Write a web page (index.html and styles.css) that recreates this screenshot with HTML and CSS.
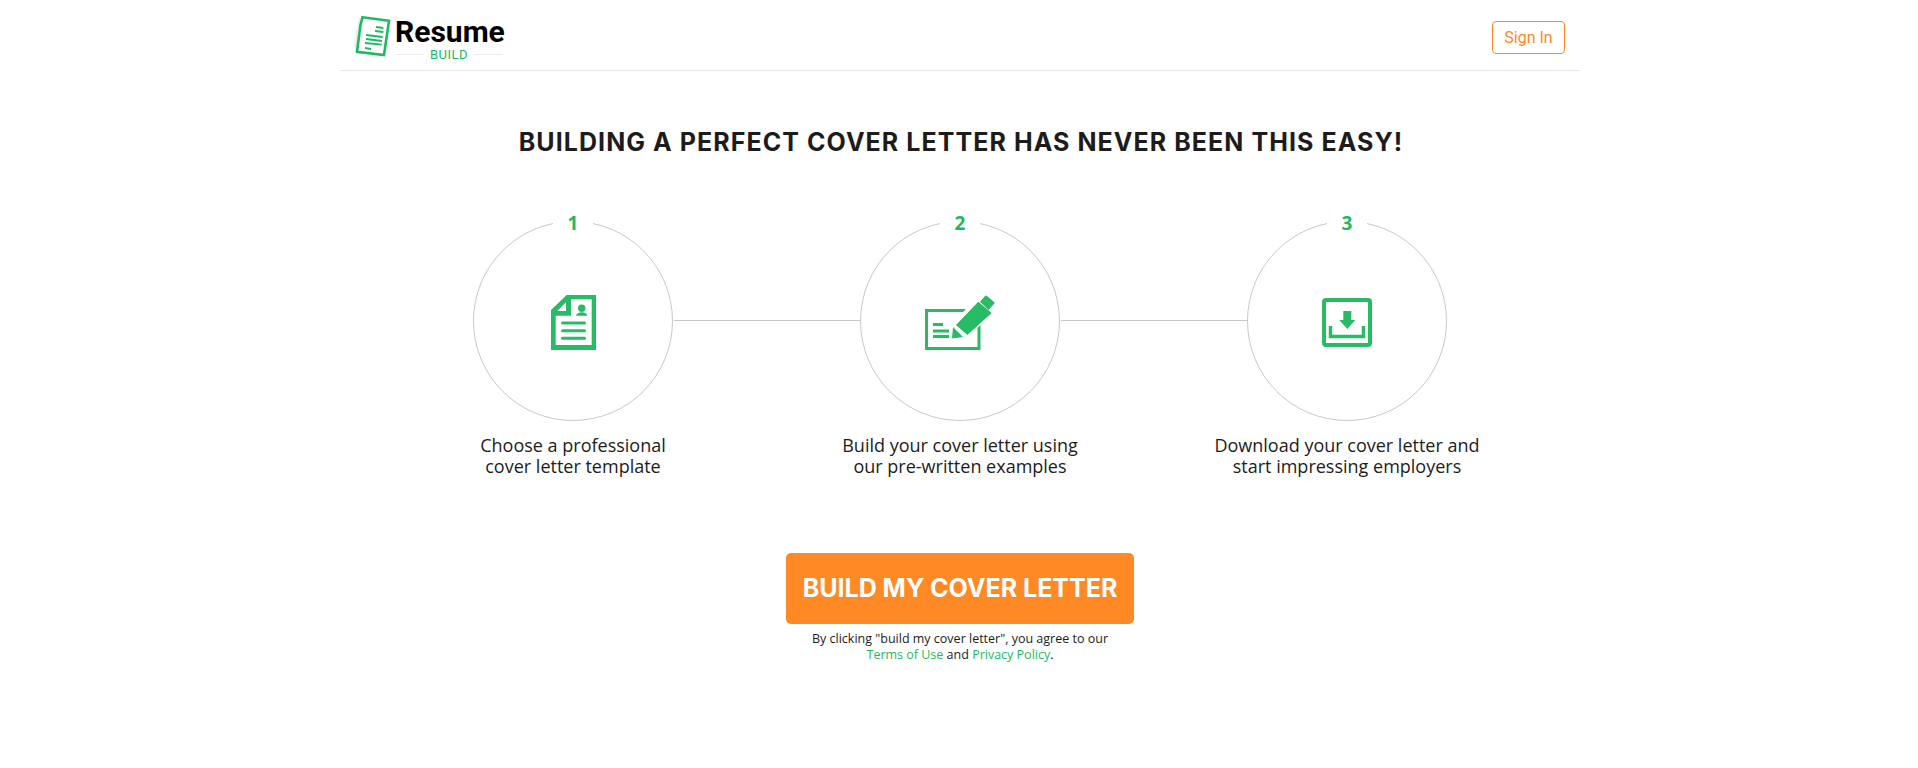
FILE: index.html
```html
<!DOCTYPE html>
<html lang="en">
<head>
  <meta charset="UTF-8">
  <title>Resume Build - Cover Letter</title>
  <link rel="stylesheet" href="styles.css">
</head>
<body>
  <div class="container">
    <header class="topbar">
      <a class="logo" href="#">
        <svg class="logo-icon" width="38" height="44" viewBox="0 0 38 44">
          <path d="M5 3 L0 30 L3 38 L7 3 Z" fill="#ececec"/>
          <path d="M8.500 2.200 L35 5.800 L30 40 L3 36.800 L6.500 10 Z" fill="#fff" stroke="#1dba61" stroke-width="2.600"/>
          <g stroke="#1dba61" stroke-width="1.800">
            <path d="M22 12 L29.300 13"/>
            <path d="M21 16 L29.300 17"/>
            <path d="M12 20 L28.700 22"/>
            <path d="M12 24 L28 26"/>
            <path d="M11 28 L27.700 29.700"/>
            <path d="M11 33 L17 34"/>
          </g>
        </svg>
        <div class="logo-text">
          <div class="logo-name">Resume</div>
          <div class="logo-sub">BUILD</div>
        </div>
      </a>
      <a class="sign-in" href="#">Sign In</a>
    </header>

    <h1 class="title">BUILDING A PERFECT COVER LETTER HAS NEVER BEEN THIS EASY!</h1>

    <div class="steps">
      <div class="step">
        <div class="circle">
          <span class="num">1</span>
          <svg width="45" height="55" viewBox="0 0 45 55">
            <path fill="#27bb66" fill-rule="evenodd" d="M15.700 0 H45 V55 H0 V15 Z M20 4.300 V20.700 H4.700 V50 H40.700 V4.300 Z M15 7.300 L6.300 16 H15 Z"/>
            <circle cx="30.700" cy="13.300" r="3.700" fill="#27bb66"/>
            <path d="M25 20.700 C25.500 16 36 16 36.300 20.700 Z" fill="#27bb66"/>
            <rect x="10" y="26.500" width="25" height="3" rx="1.500" fill="#27bb66"/>
            <rect x="10" y="34.200" width="25" height="3" rx="1.500" fill="#27bb66"/>
            <rect x="10" y="41.800" width="25" height="3" rx="1.500" fill="#27bb66"/>
          </svg>
        </div>
        <p>Choose a professional<br>cover letter template</p>
      </div>
      <div class="step">
        <div class="circle">
          <span class="num">2</span>
          <svg width="70" height="55" viewBox="0 0 70 55">
            <path fill="#27bb66" d="M0 14 H41 L38 17 H3 V52 H52.500 V33 L55.500 30 V55 H0 Z"/>
            <rect x="8" y="28" width="10" height="3" fill="#27bb66"/>
            <rect x="8" y="34.500" width="16" height="3" fill="#27bb66"/>
            <rect x="8" y="40" width="16" height="3" fill="#27bb66"/>
            <path fill="#27bb66" d="M31 30 L53.300 6.700 L66.700 18 L42.300 40 Z"/>
            <path fill="#27bb66" d="M55 6.700 L60 1 Q61 0 62 1 L69 7 Q70 8 69 9 L63.500 15 Z"/>
            <path fill="#27bb66" d="M28 32 L38 42 L27 43.500 Z"/>
          </svg>
        </div>
        <p>Build your cover letter using<br>our pre-written examples</p>
      </div>
      <div class="step">
        <div class="circle">
          <span class="num">3</span>
          <svg width="50" height="49" viewBox="0 0 50 49">
            <rect x="2" y="2" width="46" height="45" rx="2" fill="none" stroke="#27bb66" stroke-width="4"/>
            <path fill="#27bb66" d="M21.300 13 H29.300 V22 H33.300 L25.300 31 L17.300 22 H21.300 Z"/>
            <path fill="none" stroke="#27bb66" stroke-width="3.500" d="M8.500 28 V38.500 H41.500 V28"/>
          </svg>
        </div>
        <p>Download your cover letter and<br>start impressing employers</p>
      </div>
    </div>

    <div class="cta">
      <a class="build-btn" href="#">BUILD MY COVER LETTER</a>
      <p class="terms">By clicking "build my cover letter", you agree to our<br><a href="#">Terms of Use</a> and <a href="#">Privacy Policy</a>.</p>
    </div>
  </div>
</body>
</html>
```

FILE: styles.css
```css
:root {
  --green: #1dba61;
  --orange: #ff8a25;
  --ink: #1c1c1c;
  --line: #c8c8c8;
}
body {
  margin: 0;
  padding-left: 2px;
  background: #fff;
  font-family: 'Open Sans', Arial, sans-serif;
  color: var(--ink);
}
a {
  text-decoration: none;
}
.container {
  width: 1240px;
  margin: 0 auto;
}
.topbar {
  height: 66px;
  padding: 4px 15px 0 14px;
  border-bottom: 1px solid #e8e8e8;
  display: flex;
  align-items: center;
  justify-content: space-between;
}
.logo {
  display: flex;
  align-items: center;
  gap: 3px;
  color: #000;
}
.logo-text {
  width: 108px;
  margin-top: 4px;
}
.logo-name {
  font-family: Roboto, Arial, sans-serif;
  font-weight: 700;
  font-size: 30px;
  line-height: 30px;
}
.logo-sub {
  display: flex;
  align-items: center;
  gap: 6px;
  font-family: Roboto, Arial, sans-serif;
  font-size: 13px;
  line-height: 15px;
  letter-spacing: 0.5px;
  color: var(--green);
}
.logo-sub::before,
.logo-sub::after {
  content: "";
  flex: 1;
  height: 1px;
  background: #ececec;
}
.sign-in {
  width: 71px;
  height: 31px;
  line-height: 31px;
  text-align: center;
  border: 1px solid var(--orange);
  border-radius: 4px;
  color: var(--orange);
  font-family: Roboto, Arial, sans-serif;
  font-size: 16px;
}
.title {
  margin: 55px 0 0;
  padding-left: 2px;
  font-family: Inter, Roboto, Arial, sans-serif;
  font-weight: 700;
  font-size: 25px;
  line-height: 32px;
  letter-spacing: 1.06px;
  text-align: center;
}
.steps {
  display: flex;
  justify-content: center;
  margin-top: 63px;
}
.step {
  width: 387px;
  position: relative;
  text-align: center;
}
.step + .step::before {
  content: "";
  position: absolute;
  top: 99px;
  left: -93px;
  width: 187px;
  height: 1px;
  background: var(--line);
}
.circle {
  width: 198px;
  height: 198px;
  margin: 0 auto;
  border: 1px solid var(--line);
  border-radius: 50%;
  position: relative;
  display: flex;
  align-items: center;
  justify-content: center;
}
.circle svg {
  margin-top: 3px;
}
.num {
  position: absolute;
  top: -13px;
  left: 50%;
  width: 40px;
  margin-left: -20px;
  background: #fff;
  color: var(--green);
  font-weight: 700;
  font-size: 19px;
  line-height: 28px;
}
.step p {
  margin: 14px 0 0;
  font-size: 18px;
  line-height: 21px;
}
.cta {
  margin-top: 76px;
  text-align: center;
}
.build-btn {
  display: inline-block;
  width: 348px;
  height: 71px;
  line-height: 71px;
  background: var(--orange);
  border-radius: 5px;
  color: #fff;
  font-family: Inter, Roboto, Arial, sans-serif;
  font-weight: 700;
  font-size: 25px;
}
.terms {
  margin: 7px 0 0;
  font-size: 12.500px;
  line-height: 16px;
}
.terms a {
  color: var(--green);
}
```
